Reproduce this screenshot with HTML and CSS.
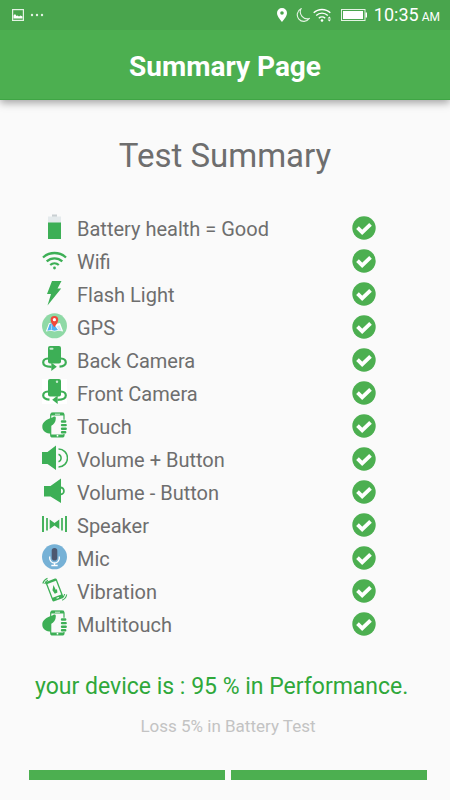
FILE: index.html
```html
<!DOCTYPE html>
<html lang="en">
<head>
  <meta charset="UTF-8" />
  <meta name="viewport" content="width=device-width, initial-scale=1.0"/>
  <title>Summary Page</title>
  <link rel="stylesheet" href="styles.css">
</head>
<body>
  <svg class="sprite" aria-hidden="true">
    <symbol id="check" viewBox="0 0 24 24">
      <circle cx="12" cy="12" r="11.7" fill="#4caf50"/>
      <path d="M5.5 11.7l4.700 4.700 8.300-8" fill="none" stroke="#fff" stroke-width="3.8"/>
    </symbol>
    <symbol id="touch" viewBox="0 0 26 26">
      <rect x="8.700" y="1" width="13.300" height="24" rx="2" fill="#fafafa" stroke="#3daf56" stroke-width="1.200"/>
      <path d="M9 .8h13v2.600H9zM9 22.500h13v2.600H9z" fill="#3daf56"/>
      <path d="M13 2.200h5" stroke="#fff" stroke-width=".8"/>
      <circle cx="15.500" cy="23.700" r=".9" fill="#fff"/>
      <path d="M7.500 6.500C3 8.500 .3 11 .3 14.500c0 4 2.700 6.500 7 7h1.500v-7.500c3-1.500 5-4 5-7.500.3-2.500-2-2.500-3.500-1z" fill="#3daf56"/>
      <path d="M20 9.500h3.500M20 13.100h4M20 16.700h4M20 20.300h3.500" stroke="#fafafa" stroke-width="3.600" stroke-linecap="round"/>
      <path d="M20 9.500h3.200M20 13.100h3.700M20 16.700h3.700M20 20.300h3.200" stroke="#3daf56" stroke-width="2.400" stroke-linecap="round"/>
    </symbol>
  </svg>

  <header class="header">
    <div class="status-bar">
      <div class="status-left">
        <svg width="12" height="12" viewBox="0 0 12 12">
          <rect x=".6" y=".6" width="10.800" height="10.800" fill="none" stroke="#e4f3e4" stroke-width="1.200"/>
          <path d="M1.500 9.500V6.500L3 5l1.500 2 1-.5L7 7.500 8.500 6.500l2 1v2z" fill="#fff"/>
        </svg>
        <svg width="14" height="4" viewBox="0 0 14 4" fill="#e4f3e4">
          <circle cx="2" cy="2" r="1.200"/><circle cx="7" cy="2" r="1.200"/><circle cx="12" cy="2" r="1.200"/>
        </svg>
      </div>
      <div class="status-right">
        <svg width="10" height="14" viewBox="0 0 10 14">
          <path fill-rule="evenodd" d="M5 0a5 5 0 0 0-5 5c0 3.500 5 9 5 9s5-5.500 5-9a5 5 0 0 0-5-5zm0 3.200a1.800 1.800 0 1 1 0 3.600 1.800 1.800 0 0 1 0-3.600z" fill="#fff"/>
        </svg>
        <svg class="moon" width="14" height="14" viewBox="0 0 14 14">
          <path d="M5 .8A6.600 6.600 0 1 0 13.300 10.500 7 7 0 0 1 5 .8z" fill="none" stroke="#e4f3e4" stroke-width="1.100"/>
        </svg>
        <svg class="signal" width="19" height="14" viewBox="0 0 19 14">
          <path d="M.7 4.800a12 12 0 0 1 16.600 0M3.200 7.500a8.300 8.300 0 0 1 11.600 0M5.800 10.200a4.600 4.600 0 0 1 6.400 0" fill="none" stroke="#fff" stroke-width="1.400"/>
          <circle cx="9" cy="12.500" r="1.300" fill="#fff"/>
          <path d="M14.600 10.600l1.700-2 1.700 2zM14.600 11.600l1.700 2 1.700-2z" fill="#fff"/>
        </svg>
        <svg class="power" width="27" height="12" viewBox="0 0 27 12">
          <rect x=".5" y=".5" width="23.500" height="11" fill="none" stroke="#e4f3e4"/>
          <path d="M2 2h20v8H2zM24.500 3.500H26v5h-1.500z" fill="#fff"/>
        </svg>
        <div class="time"><span>10:35</span><small>AM</small></div>
      </div>
    </div>
    <h1 class="title">Summary Page</h1>
  </header>

  <main class="content">
    <h2 class="heading">Test Summary</h2>

    <ul class="tests">
      <li class="test">
        <svg class="icon" viewBox="0 0 26 26">
          <path d="M10 .5h5V3h-5z" fill="#c9cfd2"/>
          <path d="M6 2.500h13V9H6z" fill="#e4eaec"/>
          <path d="M6 8.500h13V25H6z" fill="#3daf56"/>
        </svg>
        <span class="name">Battery health = Good</span>
        <svg class="check"><use href="#check"/></svg>
      </li>
      <li class="test">
        <svg class="icon" viewBox="0 0 26 26">
          <path d="M1 10.500a17 17 0 0 1 23 0M4.700 14.400a11.500 11.500 0 0 1 15.600 0M8.200 18a6.500 6.500 0 0 1 8.600 0" fill="none" stroke="#3daf56" stroke-width="2.300"/>
          <circle cx="12.500" cy="21" r="1.400" fill="#3daf56"/>
        </svg>
        <span class="name">Wifi</span>
        <svg class="check"><use href="#check"/></svg>
      </li>
      <li class="test">
        <svg class="icon" viewBox="0 0 26 26">
          <path d="M10 1h9.500l-4 7.500h3.700L5.500 25.500l3.500-11.500H5z" fill="#3daf56"/>
        </svg>
        <span class="name">Flash Light</span>
        <svg class="check"><use href="#check"/></svg>
      </li>
      <li class="test">
        <svg class="icon" viewBox="0 0 26 26">
          <circle cx="12.500" cy="12.800" r="12.500" fill="#8fd9a6"/>
          <path d="M7 10L3.800 18.500l4.700-.8 4 .8 4-.8 4.700.8L18 10l-5 1z" fill="#fff"/>
          <path d="M7.700 11l2.300-.8-1.200 6.800-3.500.7zM12.500 12l3.500 5-3.500.8-3.200-.8 1-6z" fill="#4fb0f0"/>
          <path d="M14.500 13l2.300 4.200 2.700.5-2-5.500z" fill="#cfe8f8"/>
          <path d="M12.400 3a3.800 3.800 0 0 0-3.800 3.900c0 2.800 3.800 7.100 3.800 7.100s3.800-4.300 3.800-7.100A3.800 3.800 0 0 0 12.400 3z" fill="#f0483a"/>
          <circle cx="12.400" cy="6.700" r="1.600" fill="#fff"/>
        </svg>
        <span class="name">GPS</span>
        <svg class="check"><use href="#check"/></svg>
      </li>
      <li class="test">
        <svg class="icon" viewBox="0 0 26 26">
          <rect x="6" y="0" width="13" height="17.500" rx="2" fill="#3daf56"/>
          <rect x="7.500" y="1.800" width="4" height="2" rx="1" fill="#c8ebcf"/>
          <path d="M6 12.500c-3 .2-4.800 1.700-4.800 4 0 2.700 3 4.300 8.300 4.300M19 12.500c3 .2 4.800 1.700 4.800 4 0 2.200-2 3.700-6.300 4.200" fill="none" stroke="#3daf56" stroke-width="2.200"/>
          <path d="M9.300 16.500l5.500 4.300-5.500 4.200z" fill="#3daf56"/>
        </svg>
        <span class="name">Back Camera</span>
        <svg class="check"><use href="#check"/></svg>
      </li>
      <li class="test">
        <svg class="icon" viewBox="0 0 26 26">
          <path d="M0 0h25v25H0z" fill="#fff"/>
          <rect x="6" y="0" width="13" height="17.500" rx="2" fill="#3daf56"/>
          <circle cx="15" cy="2.800" r="1.200" fill="#c8ebcf"/>
          <path d="M6 12.500c-3 .2-4.800 1.700-4.800 4 0 2.200 2 3.700 6.300 4.200M19 12.500c3 .2 4.800 1.700 4.800 4 0 2.700-3 4.300-8.300 4.300" fill="none" stroke="#3daf56" stroke-width="2.200"/>
          <path d="M15.700 16.500l-5.500 4.300 5.500 4.200z" fill="#3daf56"/>
        </svg>
        <span class="name">Front Camera</span>
        <svg class="check"><use href="#check"/></svg>
      </li>
      <li class="test">
        <svg class="icon"><use href="#touch"/></svg>
        <span class="name">Touch</span>
        <svg class="check"><use href="#check"/></svg>
      </li>
      <li class="test">
        <svg class="icon" viewBox="0 0 26 26">
          <path d="M0 7h5.500L14 .5V25l-8.500-6H0z" fill="#3daf56"/>
          <path d="M16.500 9.300a4 4 0 0 1 0 7.500M16.500 4a9 9 0 0 1 0 18" fill="none" stroke="#3daf56" stroke-width="1.500"/>
        </svg>
        <span class="name">Volume + Button</span>
        <svg class="check"><use href="#check"/></svg>
      </li>
      <li class="test">
        <svg class="icon" viewBox="0 0 26 26">
          <path d="M2 8h6.500L19 .5V25L8.500 18.500H2z" fill="#3daf56"/>
          <path d="M18.500 9.500a3.300 3.300 0 0 1 0 6.800" fill="none" stroke="#3daf56" stroke-width="1.800"/>
        </svg>
        <span class="name">Volume - Button</span>
        <svg class="check"><use href="#check"/></svg>
      </li>
      <li class="test">
        <svg class="icon" viewBox="0 0 26 26">
          <path d="M1 5v16M24 5v16" stroke="#3daf56" stroke-width="1.900"/>
          <path d="M5 7v12.500M20 7v12.500" stroke="#3daf56" stroke-width="1.700"/>
          <path d="M7.700 8.500L12.500 12l4.800-3.500v9.500L12.500 14.500 7.700 18z" fill="#3daf56"/>
        </svg>
        <span class="name">Speaker</span>
        <svg class="check"><use href="#check"/></svg>
      </li>
      <li class="test">
        <svg class="icon" viewBox="0 0 26 26">
          <circle cx="12.500" cy="12.800" r="12.500" fill="#76b1d6"/>
          <rect x="9.700" y="4" width="5.600" height="12.500" rx="2.800" fill="#4d5870"/>
          <path d="M7.700 12.500v1.700a4.800 4.800 0 0 0 9.600 0v-1.700M12.500 19v2.500M9.300 21.500h6.400" fill="none" stroke="#fff" stroke-width="1.300"/>
        </svg>
        <span class="name">Mic</span>
        <svg class="check"><use href="#check"/></svg>
      </li>
      <li class="test">
        <svg class="icon" viewBox="0 0 26 26">
          <g transform="rotate(-21 12.500 13)">
            <rect x="6.700" y="2.500" width="11.800" height="21" rx="1.500" fill="#3daf56"/>
            <path d="M8 4.800h9.200V19.500H8z" fill="#fafafa"/>
            <path d="M13.300 8l-2.800 4.500 1 4h2.800l.8-3.500-1.300.5z" fill="#3daf56"/>
            <path d="M11.500 21.500h2.500" stroke="#fff"/>
          </g>
          <path d="M.8 6.500A8 8 0 0 1 5.500 1.200M2.800 7a5.500 5.500 0 0 1 3.200-3.700M24.700 17.500a8 8 0 0 1-4.500 5.800M22.700 17a5.500 5.500 0 0 1-3 3.900" fill="none" stroke="#3daf56" stroke-width="1.100"/>
        </svg>
        <span class="name">Vibration</span>
        <svg class="check"><use href="#check"/></svg>
      </li>
      <li class="test">
        <svg class="icon"><use href="#touch"/></svg>
        <span class="name">Multitouch</span>
        <svg class="check"><use href="#check"/></svg>
      </li>
    </ul>

    <p class="result">your device is : 95 % in Performance.</p>
    <p class="loss">Loss 5% in Battery Test</p>

    <div class="actions">
      <button class="action" aria-label="Back"></button>
      <button class="action" aria-label="Next"></button>
    </div>
  </main>
</body>
</html>
```
FILE: styles.css
```css
:root {
  --green: #4caf50;
  --green-dark: #49a54d;
  --bg: #fafafa;
  --text: #6e6e6e;
}

* {
  box-sizing: border-box;
}

body {
  margin: 0;
  font-family: Roboto, sans-serif;
  background: var(--bg);
  color: var(--text);
}

.sprite {
  display: none;
}

.header {
  background: var(--green);
  color: white;
  border-bottom: 1px solid #3fa544;
  box-shadow: 0 3px 8px rgba(0, 0, 0, 0.35);
}

.status-bar {
  display: flex;
  justify-content: space-between;
  align-items: center;
  height: 30px;
  padding: 0 10px 0 12px;
  background: var(--green-dark);
}

.status-left,
.status-right {
  display: flex;
  align-items: center;
}

.status-left {
  gap: 6px;
}

.moon {
  margin-left: 9px;
}

.signal {
  margin-left: 3px;
}

.power {
  margin: 0 6px 0 9px;
}

.time {
  display: flex;
  align-items: baseline;
  gap: 3px;
  padding-top: 2px;
  font-size: 18px;
  line-height: 28px;
}

.time small {
  font-size: 12px;
}

.title {
  margin: 0;
  padding: 4px 0 0;
  font-size: 28px;
  line-height: 65px;
  font-weight: bold;
  text-align: center;
}

.content {
  padding: 34px 23px 20px 29px;
}

.heading {
  margin: 0 6px 34px 0;
  font-size: 33px;
  line-height: 44px;
  font-weight: normal;
  text-align: center;
}

.tests {
  list-style: none;
  margin: 0;
  padding: 0 51px 0 13px;
}

.test {
  display: flex;
  align-items: flex-start;
  height: 33px;
}

.icon {
  width: 26px;
  height: 26px;
  margin: 2px 9px 0 0;
}

.name {
  flex: 1;
  font-size: 20px;
  line-height: 34px;
}

.check {
  width: 24px;
  height: 24px;
  margin-top: 4px;
}

.result {
  margin: 31px 0 0 6px;
  color: #2fa83a;
  font-size: 23px;
  line-height: 30px;
}

.loss {
  margin: 12px 0 0;
  color: #c3c3c3;
  font-size: 17px;
  line-height: 24px;
  text-align: center;
}

.actions {
  display: flex;
  gap: 6px;
  margin-top: 32px;
}

.action {
  flex: 1;
  height: 10px;
  padding: 0;
  border: none;
  background: var(--green);
  cursor: pointer;
}
```
